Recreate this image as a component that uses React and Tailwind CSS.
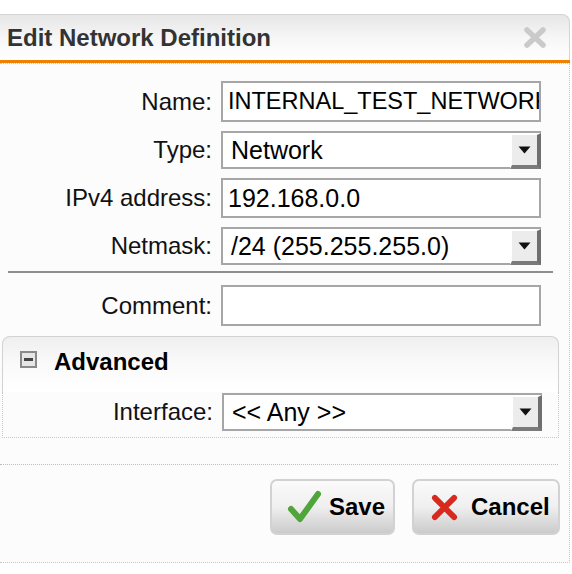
import React from "react";

const font = "font-['Liberation_Sans',Arial,Helvetica,sans-serif]";

function Label({ children }) {
  return (
    <div className="w-[213px] text-right text-[24px] leading-none text-[#111] pr-[1px]">
      {children}
    </div>
  );
}

function TextBox({ value, h = "h-[40px]", size = "text-[25px]" }) {
  return (
    <div
      className={`${h} ${size} w-[320px] border-2 border-[#a6a6a6] bg-white flex items-center pl-[5px] pr-[2px] overflow-hidden whitespace-nowrap leading-none text-black`}
    >
      {value}
    </div>
  );
}

function SelectBox({ value }) {
  return (
    <div className="h-[38px] w-[320px] border-2 border-[#a6a6a6] bg-white flex">
      <div className="flex-1 flex items-center pl-[8px] overflow-hidden whitespace-nowrap text-[25px] leading-none text-black">
        {value}
      </div>
      <div className="w-[31px] -mr-[2px] -mb-[2px] flex items-center justify-center bg-[#ececec] border-l-2 border-t-2 border-l-white border-t-white border-r-[4px] border-b-[4px] border-r-[#6f6f6f] border-b-[#7a7a7a]">
        <svg width="13" height="8" viewBox="0 0 13 8">
          <path d="M0.5 0.5 L12.5 0.5 L6.5 7.5 Z" fill="#111" />
        </svg>
      </div>
    </div>
  );
}

function Row({ label, children, className = "" }) {
  return (
    <div className={`flex items-center gap-[8px] ${className}`}>
      <Label>{label}</Label>
      {children}
    </div>
  );
}

export default function App() {
  return (
    <div className={`w-[572px] h-[574px] bg-white pt-[14px] overflow-hidden ${font}`}>
      <div className="w-[570px]">
        {/* Title bar */}
        <div className="h-[46px] flex items-center justify-between pl-[7px] pr-[22px] bg-gradient-to-b from-[#e6e6e6] via-[#f6f6f6] to-white border-t border-r border-[#d4d4d4] rounded-tr-[8px]">
          <div className="text-[24px] font-bold text-[#333] leading-none pt-[1px]">
            Edit Network Definition
          </div>
          <svg width="24" height="23" viewBox="0 0 24 23">
            <path
              d="M4 4 L20 19 M20 4 L4 19"
              stroke="#cacaca"
              strokeWidth="5.5"
              strokeLinecap="round"
            />
          </svg>
        </div>
        <div className="h-[3px] bg-[#ef8100]" />
        {/* Body */}
        <div className="h-[500px] bg-[#fcfcfc] border-t border-r border-b border-dotted border-[#c8c8c8]">
          <div className="pt-[17px]">
            <Row label="Name:">
              <TextBox value="INTERNAL_TEST_NETWORK" h="h-[41px]" size="text-[23.5px]" />
            </Row>
            <Row label="Type:" className="mt-[9px]">
              <SelectBox value="Network" />
            </Row>
            <Row label="IPv4 address:" className="mt-[9px]">
              <TextBox value="192.168.0.0" h="h-[40px]" />
            </Row>
            <Row label="Netmask:" className="mt-[9px]">
              <SelectBox value="/24 (255.255.255.0)" />
            </Row>
            <div className="ml-[8px] w-[545px] h-[2px] bg-[#8e8e8e] mt-[6px]" />
            <Row label="Comment:" className="mt-[12px]">
              <TextBox value="" h="h-[41px]" />
            </Row>

            {/* Advanced fieldset */}
            <div className="ml-[2px] w-[557px] mt-[10px]">
              <div className="h-[56px] border-t border-l border-r border-[#d2d2d2] rounded-t-[8px] bg-gradient-to-b from-[#efefef] via-[#fafafa] to-white flex items-start pt-[12px] pl-[17px]">
                <div className="w-[17px] h-[17px] border-2 border-[#8a8a8a] bg-[#e6e6e6] flex items-center justify-center mt-[2px]">
                  <div className="w-[9px] h-[3px] bg-[#444]" />
                </div>
                <div className="ml-[17px] text-[24px] font-bold text-black leading-none pt-[1px]">
                  Advanced
                </div>
              </div>
              <div className="h-[46px] border-l border-r border-b border-dotted border-[#c8c8c8] pt-[1px]">
                <div className="-ml-[2px]">
                  <Row label="Interface:">
                    <SelectBox value="<< Any >>" />
                  </Row>
                </div>
              </div>
            </div>

            <div className="mt-[26px] w-[558px] border-t border-dotted border-[#bdbdbd]" />

            <div className="mt-[14px] flex justify-end gap-[17px] pr-[9px]">
              <button className="w-[125px] h-[56px] rounded-[7px] border-2 border-[#d2d2d2] bg-gradient-to-b from-[#fbfbfb] via-[#efefef] to-[#cbcbcb] flex items-center pl-[15px]">
                <svg width="34" height="34" viewBox="0 0 34 34">
                  <path
                    d="M4 19 L13 29 L31 4"
                    fill="none"
                    stroke="#4fa53a"
                    strokeWidth="6"
                    strokeLinecap="round"
                    strokeLinejoin="round"
                  />
                </svg>
                <span className="ml-[8px] text-[24px] font-bold text-black leading-none">Save</span>
              </button>
              <button className="w-[148px] h-[56px] rounded-[7px] border-2 border-[#d2d2d2] bg-gradient-to-b from-[#fbfbfb] via-[#efefef] to-[#cbcbcb] flex items-center pl-[17px]">
                <svg width="27" height="27" viewBox="0 0 28 28">
                  <path
                    d="M4 4 L24 24 M24 4 L4 24"
                    stroke="#d62a1f"
                    strokeWidth="6"
                    strokeLinecap="round"
                  />
                </svg>
                <span className="ml-[13px] text-[24px] font-bold text-black leading-none">Cancel</span>
              </button>
            </div>
          </div>
        </div>
      </div>
    </div>
  );
}
